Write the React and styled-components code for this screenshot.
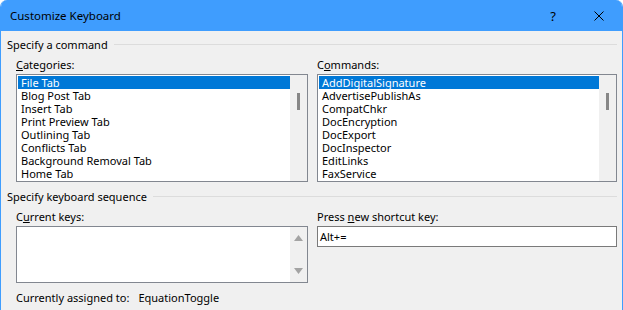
import React from 'react';
import styled, { createGlobalStyle } from 'styled-components';

const GlobalStyle = createGlobalStyle`
    html, body {
        margin: 0;
        padding: 0;
        background: #ffffff;
        overflow: hidden;
    }
    body {
        font-family: 'Noto Sans', 'Open Sans', Arial, sans-serif;
        font-size: 11px;
        color: #000000;
    }
`;

const Janela = styled.div`
    width: 623px;
    height: 310px;
    box-sizing: border-box;
    border-left: 1px solid #3f9dfe;
    border-right: 1px solid #3f9dfe;
    border-radius: 7px 7px 0 0;
    background: #f0f0f0;
    overflow: hidden;
    display: flex;
    flex-direction: column;
`;

const BarraTitulo = styled.div`
    height: 31px;
    flex-shrink: 0;
    background: #3f9dfe;
    display: flex;
    align-items: center;
    padding-left: 9px;
    font-size: 11.5px;
    color: #000000;
`;

const Titulo = styled.span`
    flex: 1;
`;

const BotaoTitulo = styled.div`
    width: 46px;
    height: 31px;
    display: flex;
    align-items: center;
    justify-content: center;
    font-size: 13px;
`;

const Corpo = styled.div`
    padding: 5px 5px 0 6px;
    display: flex;
    flex-direction: column;
`;

const Grupo = styled.div`
    display: flex;
    align-items: center;
    gap: 6px;
    height: 16px;
    margin-top: ${p => p.$topo || 0}px;

    &::after {
        content: '';
        flex: 1;
        height: 1px;
        background: #dcdcdc;
    }
`;

const Colunas = styled.div`
    display: flex;
    gap: 9px;
    padding-left: 9px;
`;

const Coluna = styled.div`
    display: flex;
    flex-direction: column;
    width: ${p => p.$largura}px;
`;

const Rotulo = styled.div`
    line-height: 15px;
    margin: 5px 0 2px;
`;

const Lista = styled.div`
    height: 108px;
    box-sizing: border-box;
    border: 1px solid #828790;
    background: #ffffff;
    display: flex;
`;

const Itens = styled.div`
    flex: 1;
    padding: 1px 0 0 1px;
`;

const Item = styled.div`
    height: 13px;
    line-height: 13px;
    padding-left: 3px;
    white-space: nowrap;
    background: ${p => (p.$ativo ? '#0078d7' : 'transparent')};
    color: ${p => (p.$ativo ? '#ffffff' : '#000000')};
`;

const Trilho = styled.div`
    width: 17px;
    background: #f0f0f0;
    display: flex;
    flex-direction: column;
    align-items: center;
    justify-content: ${p => (p.$setas ? 'space-between' : 'flex-start')};
    padding: ${p => (p.$setas ? '8px 0 8px' : '18px 0 0')};
    box-sizing: border-box;
`;

const Polegar = styled.div`
    width: 3px;
    height: 17px;
    background: #868686;
`;

const CaixaTeclas = styled.div`
    height: 57px;
    box-sizing: border-box;
    border: 1px solid #828790;
    background: #ffffff;
    display: flex;
    justify-content: flex-end;
`;

const Entrada = styled.div`
    height: 21px;
    box-sizing: border-box;
    border: 1px solid #7a7a7a;
    background: #ffffff;
    padding-left: 2px;
    line-height: 19px;
`;

const Atribuido = styled.div`
    display: flex;
    gap: 9px;
    padding-left: 9px;
    margin-top: 7px;
    line-height: 15px;
`;

const categorias = [
    'File Tab',
    'Blog Post Tab',
    'Insert Tab',
    'Print Preview Tab',
    'Outlining Tab',
    'Conflicts Tab',
    'Background Removal Tab',
    'Home Tab',
];

const comandos = [
    'AddDigitalSignature',
    'AdvertisePublishAs',
    'CompatChkr',
    'DocEncryption',
    'DocExport',
    'DocInspector',
    'EditLinks',
    'FaxService',
];

const Seta = ({ baixo }) => (
    <svg width="9" height="6" viewBox="0 0 9 6">
        <polygon points={baixo ? '0,0 9,0 4.5,6' : '4.5,0 9,6 0,6'} fill="#a3a3a3" />
    </svg>
);

const ListaRolavel = ({ itens }) => (
    <Lista>
        <Itens>
            {itens.map((texto, i) => (
                <Item key={texto} $ativo={i === 0}>{texto}</Item>
            ))}
        </Itens>
        <Trilho>
            <Polegar />
        </Trilho>
    </Lista>
);

const App = () => (
    <>
        <GlobalStyle />
        <Janela>
            <BarraTitulo>
                <Titulo>Customize Keyboard</Titulo>
                <BotaoTitulo>?</BotaoTitulo>
                <BotaoTitulo>
                    <svg width="10" height="10" viewBox="0 0 10 10">
                        <path d="M0.5 0.5 L9.5 9.5 M9.5 0.5 L0.5 9.5" stroke="#000" strokeWidth="1" />
                    </svg>
                </BotaoTitulo>
            </BarraTitulo>
            <Corpo>
                <Grupo>Specify a command</Grupo>
                <Colunas>
                    <Coluna $largura={292}>
                        <Rotulo><u>C</u>ategories:</Rotulo>
                        <ListaRolavel itens={categorias} />
                    </Coluna>
                    <Coluna $largura={300}>
                        <Rotulo>C<u>o</u>mmands:</Rotulo>
                        <ListaRolavel itens={comandos} />
                    </Coluna>
                </Colunas>
                <Grupo $topo={6}>Specify keyboard sequence</Grupo>
                <Colunas>
                    <Coluna $largura={292}>
                        <Rotulo>C<u>u</u>rrent keys:</Rotulo>
                        <CaixaTeclas>
                            <Trilho $setas>
                                <Seta />
                                <Seta baixo />
                            </Trilho>
                        </CaixaTeclas>
                    </Coluna>
                    <Coluna $largura={300}>
                        <Rotulo>Press <u>n</u>ew shortcut key:</Rotulo>
                        <Entrada>Alt+=</Entrada>
                    </Coluna>
                </Colunas>
                <Atribuido>
                    <span>Currently assigned to:</span>
                    <span>EquationToggle</span>
                </Atribuido>
            </Corpo>
        </Janela>
    </>
);

export default App;
